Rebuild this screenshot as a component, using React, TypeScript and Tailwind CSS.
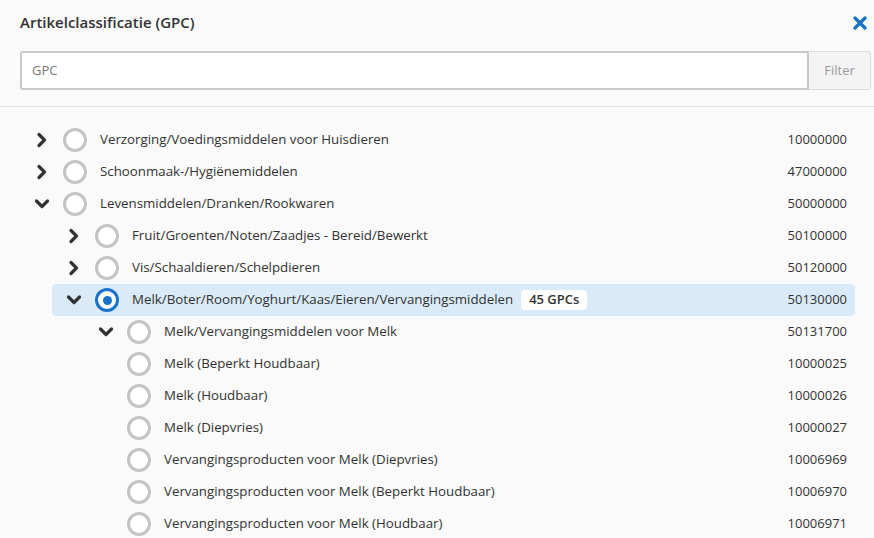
import React from 'react'

interface Node {
  label: string
  code: string
  level: number
  state: 'closed' | 'open' | 'leaf'
  selected?: boolean
  badge?: string
}

const nodes: Node[] = [
  { label: 'Verzorging/Voedingsmiddelen voor Huisdieren', code: '10000000', level: 0, state: 'closed' },
  { label: 'Schoonmaak-/Hygiënemiddelen', code: '47000000', level: 0, state: 'closed' },
  { label: 'Levensmiddelen/Dranken/Rookwaren', code: '50000000', level: 0, state: 'open' },
  { label: 'Fruit/Groenten/Noten/Zaadjes - Bereid/Bewerkt', code: '50100000', level: 1, state: 'closed' },
  { label: 'Vis/Schaaldieren/Schelpdieren', code: '50120000', level: 1, state: 'closed' },
  { label: 'Melk/Boter/Room/Yoghurt/Kaas/Eieren/Vervangingsmiddelen', code: '50130000', level: 1, state: 'open', selected: true, badge: '45 GPCs' },
  { label: 'Melk/Vervangingsmiddelen voor Melk', code: '50131700', level: 2, state: 'open' },
  { label: 'Melk (Beperkt Houdbaar)', code: '10000025', level: 2, state: 'leaf' },
  { label: 'Melk (Houdbaar)', code: '10000026', level: 2, state: 'leaf' },
  { label: 'Melk (Diepvries)', code: '10000027', level: 2, state: 'leaf' },
  { label: 'Vervangingsproducten voor Melk (Diepvries)', code: '10006969', level: 2, state: 'leaf' },
  { label: 'Vervangingsproducten voor Melk (Beperkt Houdbaar)', code: '10006970', level: 2, state: 'leaf' },
  { label: 'Vervangingsproducten voor Melk (Houdbaar)', code: '10006971', level: 2, state: 'leaf' },
]

const indent = ['pl-0', 'pl-8', 'pl-16']

function Chevron({ open }: { open: boolean }) {
  return (
    <svg width="16" height="16" viewBox="0 0 16 16" className="shrink-0">
      {open
        ? <polyline points="2.5,5 8,10.5 13.5,5" fill="none" stroke="#333" strokeWidth="3.2" strokeLinecap="round" strokeLinejoin="round" />
        : <polyline points="5,2.5 10.5,8 5,13.5" fill="none" stroke="#333" strokeWidth="3.2" strokeLinecap="round" strokeLinejoin="round" />}
    </svg>
  )
}

function Radio({ checked }: { checked?: boolean }) {
  return checked ? (
    <div className="w-6 h-6 rounded-full border-[3.5px] border-[#1a73c9] bg-white flex items-center justify-center shrink-0">
      <div className="w-[9px] h-[9px] rounded-full bg-[#1a73c9]" />
    </div>
  ) : (
    <div className="w-6 h-6 rounded-full border-[3px] border-[#c4c4c4] bg-white shrink-0" />
  )
}

export default function App() {
  return (
    <div className="w-[874px] h-[538px] overflow-hidden bg-[#fafafa] text-[#333] font-['Open_Sans',sans-serif]">
      {/* Header */}
      <div className="flex items-center justify-between pl-5 pr-[4px] h-[45px]">
        <h2 className="text-[15px] font-semibold text-[#333]">Artikelclassificatie (GPC)</h2>
        <svg width="16" height="16" viewBox="0 0 16 16" className="mr-[2px]">
          <path d="M3 3 L13 13 M13 3 L3 13" stroke="#1a73c9" strokeWidth="3.4" strokeLinecap="round" />
        </svg>
      </div>

      {/* Search */}
      <div className="flex mx-5 mr-[3px] h-[39px] mt-[6px]">
        <div className="flex-1 flex items-center bg-white border-2 border-[#c9c9c9] rounded-l-[3px] pl-[10px] text-[13px] text-[#777]">GPC</div>
        <div className="w-[62px] flex items-center justify-center bg-[#f4f4f4] border border-l-0 border-[#dcdcdc] rounded-r-[3px] text-[13px] text-[#999]">Filter</div>
      </div>

      <div className="mt-[16px] border-b border-[#dedede]" />

      {/* Tree */}
      <div className="pt-[17px] pl-5 pr-[19px]">
        {nodes.map(n => (
          <div key={n.code} className={indent[n.level]}>
            <div className={`flex items-center h-8 pl-[14px] pr-2 rounded ${n.selected ? 'bg-[#d9eaf8]' : ''}`}>
              <div className="w-4 shrink-0">{n.state !== 'leaf' && <Chevron open={n.state === 'open'} />}</div>
              <div className="ml-[13px]"><Radio checked={n.selected} /></div>
              <span className="ml-[13px] text-[13.3px] whitespace-nowrap">{n.label}</span>
              {n.badge && (
                <span className="ml-2 px-2 h-5 flex items-center bg-white rounded text-[13px] font-semibold">{n.badge}</span>
              )}
              <span className="ml-auto text-[13px]">{n.code}</span>
            </div>
          </div>
        ))}
      </div>
    </div>
  )
}
